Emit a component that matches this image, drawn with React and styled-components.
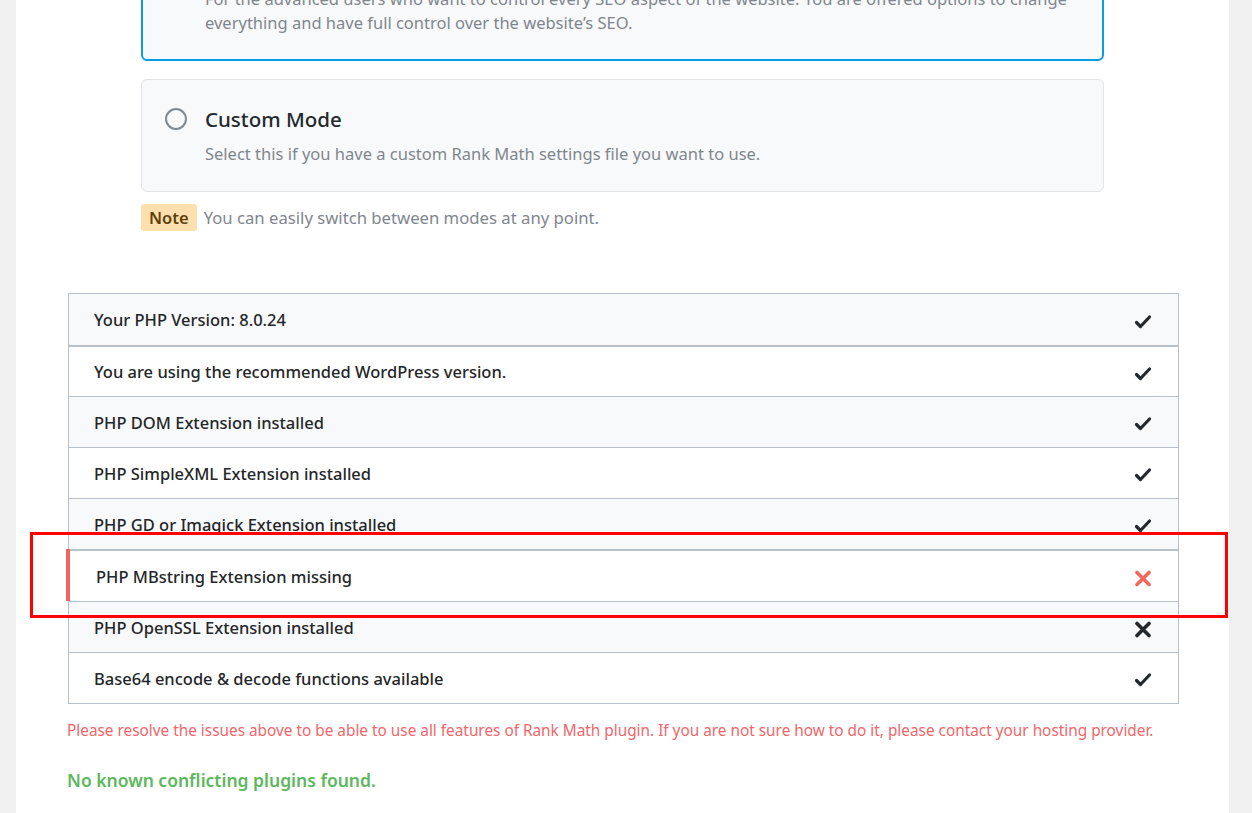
import React from "react";
import styled, { createGlobalStyle } from "styled-components";

const GlobalStyle = createGlobalStyle`
    html, body {
        margin: 0;
        padding: 0;
        background: #f0f0f1;
        height: 100%;
        overflow: hidden;
    }
    body {
        font-family: "Noto Sans", "Open Sans", sans-serif;
        color: #242628;
    }
`;

const Page = styled.div`
    display: flex;
    justify-content: center;
    height: 813px;
    padding: 0 23px 0 16px;
`;

const Panel = styled.main`
    position: relative;
    flex: 1;
    background: #fff;
    padding: 0 50px 0 52px;
    overflow: hidden;
`;

const Modes = styled.div`
    display: flex;
    flex-direction: column;
    gap: 18px;
    width: 963px;
    margin: -76px 0 0 73px;
`;

const ModeCard = styled.label`
    display: grid;
    grid-template-columns: 22px 1fr;
    column-gap: 18px;
    row-gap: 9px;
    padding: ${(p) => (p.$active ? "24px 22px 24px" : "25px 23px 25px")};
    background: #f8f9fa;
    border: ${(p) => (p.$active ? "2px solid #069de3" : "1px solid #e2e4e7")};
    border-radius: 6px;
`;

const Radio = styled.span`
    box-sizing: border-box;
    width: 22px;
    height: 22px;
    margin-top: 3px;
    border-radius: 50%;
    border: 2px solid ${(p) => (p.$checked ? "#069de3" : "#7e8993")};
    background: ${(p) => (p.$checked ? "radial-gradient(circle, #069de3 0 5px, #fff 6px)" : "transparent")};
`;

const ModeTitle = styled.h3`
    margin: 0;
    font-size: 20.5px;
    line-height: 28px;
    font-weight: 500;
    color: #23282d;
`;

const ModeText = styled.p`
    grid-column: 2;
    margin: 0;
    font-size: 16.5px;
    line-height: 24px;
    color: #7f868d;
`;

const NoteLine = styled.p`
    display: flex;
    align-items: center;
    gap: 7px;
    margin: -6px 0 0;
    font-size: 16.7px;
    color: #7f868d;
`;

const NoteBadge = styled.span`
    display: inline-flex;
    align-items: center;
    height: 27px;
    padding: 0 8px;
    border-radius: 3px;
    background: #fde0ae;
    color: #5e3f0c;
    font-size: 16.5px;
    font-weight: 600;
`;

const Checks = styled.div`
    margin-top: 62px;
    border: 1px solid #b8c0c9;
`;

const CheckRow = styled.div`
    position: relative;
    display: flex;
    align-items: center;
    justify-content: space-between;
    box-sizing: border-box;
    height: ${(p) => (p.$error ? "52px" : "51px")};
    padding: 0 26px 0 ${(p) => (p.$error ? "27px" : "25px")};
    background: ${(p) => (p.$alt ? "#f8f9fa" : "#fff")};
    border-top: ${(p) => (p.$first ? "none" : p.$thick ? "2px solid #b8c0c9" : "1px solid #b8c0c9")};
    font-size: 16.5px;
    font-weight: 500;
    color: #242628;

    ${(p) =>
        p.$error &&
        `
        &::before {
            content: "";
            position: absolute;
            left: -3px;
            top: -2px;
            bottom: 0;
            width: 4px;
            background: #f0665c;
        }
    `}
`;

const Icon = styled.svg`
    flex: none;
    margin-top: 4px;
`;

const Resolve = styled.p`
    margin: 16px 0 0 -1px;
    font-size: 15.35px;
    color: #f0666a;
`;

const NoConflict = styled.p`
    margin: 28px 0 0 -1px;
    font-size: 17.5px;
    font-weight: 600;
    color: #5cb85c;
`;

const Annotation = styled.div`
    position: absolute;
    left: 14px;
    top: 532px;
    width: 1192px;
    height: 80px;
    border: 3px solid #f00;
    pointer-events: none;
`;

function CheckIcon() {
    return (
        <Icon width="18" height="16" viewBox="0 0 18 16">
            <path d="M2.5 8.5 L6.5 12.5 L15.5 3" fill="none" stroke="#23282d" strokeWidth="3.2" strokeLinecap="round" strokeLinejoin="round" />
        </Icon>
    );
}

function CrossIcon({ color }) {
    return (
        <Icon width="18" height="17" viewBox="0 0 18 17">
            <path d="M3 2.5 L15 14.5 M15 2.5 L3 14.5" fill="none" stroke={color} strokeWidth="3.6" strokeLinecap="round" />
        </Icon>
    );
}

const checks = [
    { text: "Your PHP Version: 8.0.24", ok: true },
    { text: "You are using the recommended WordPress version.", ok: true },
    { text: "PHP DOM Extension installed", ok: true },
    { text: "PHP SimpleXML Extension installed", ok: true },
    { text: "PHP GD or Imagick Extension installed", ok: true },
    { text: "PHP MBstring Extension missing", ok: false, error: true },
    { text: "PHP OpenSSL Extension installed", ok: false },
    { text: "Base64 encode & decode functions available", ok: true },
];

export default function App() {
    return (
        <>
            <GlobalStyle />
            <Page>
                <Panel>
                    <Modes>
                        <ModeCard $active>
                            <Radio $checked />
                            <ModeTitle>Advanced Mode</ModeTitle>
                            <ModeText>
                                For the advanced users who want to control every SEO aspect of the website. You are offered options to change
                                everything and have full control over the website’s SEO.
                            </ModeText>
                        </ModeCard>
                        <ModeCard>
                            <Radio />
                            <ModeTitle>Custom Mode</ModeTitle>
                            <ModeText>Select this if you have a custom Rank Math settings file you want to use.</ModeText>
                        </ModeCard>
                        <NoteLine>
                            <NoteBadge>Note</NoteBadge>
                            You can easily switch between modes at any point.
                        </NoteLine>
                    </Modes>

                    <Checks>
                        {checks.map((c, i) => (
                            <CheckRow
                                key={c.text}
                                $first={i === 0}
                                $alt={i % 2 === 0 && !c.error}
                                $thick={i === 1 || c.error}
                                $error={c.error}
                            >
                                {c.text}
                                {c.ok ? <CheckIcon /> : <CrossIcon color={c.error ? "#f0675e" : "#23282d"} />}
                            </CheckRow>
                        ))}
                    </Checks>

                    <Resolve>
                        Please resolve the issues above to be able to use all features of Rank Math plugin. If you are not sure how to do it, please contact your hosting provider.
                    </Resolve>
                    <NoConflict>No known conflicting plugins found.</NoConflict>

                    <Annotation />
                </Panel>
            </Page>
        </>
    );
}
